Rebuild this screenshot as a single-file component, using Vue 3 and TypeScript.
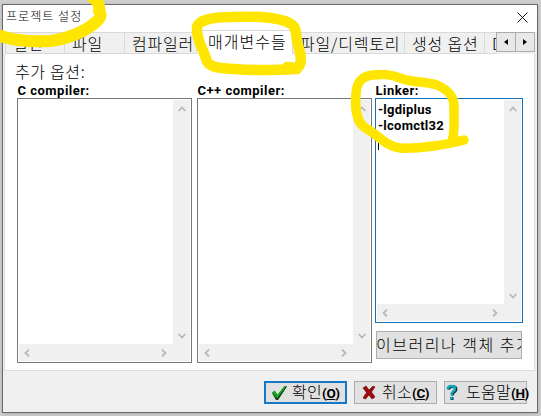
<script setup lang="ts">
interface Tab { label: string; width: number; active?: boolean }
interface Pane { label: string; text: string; focused?: boolean }

const tabs: Tab[] = [
  { label: '일반', width: 60 },
  { label: '파일', width: 60 },
  { label: '컴파일러', width: 72 },
  { label: '매개변수들', width: 96, active: true },
  { label: '파일/디렉토리', width: 112 },
  { label: '생성 옵션', width: 80 },
  { label: 'DLL', width: 52 },
]
const panes: Pane[] = [
  { label: 'C compiler:', text: '' },
  { label: 'C++ compiler:', text: '' },
  { label: 'Linker:', text: '-lgdiplus\n-lcomctl32\n', focused: true },
]
</script>

<template>
  <div class="desktop">
    <div class="window">
      <header class="title">
        <span>프로젝트 설정</span>
        <svg width="11" height="11" viewBox="0 0 11 11"><path d="M.5 .5l10 10M10.500 .5l-10 10" stroke="#111" fill="none" /></svg>
      </header>
      <nav class="tabs">
        <div class="strip">
          <div v-for="t in tabs" :key="t.label" class="tab" :class="{ active: t.active }" :style="{ width: t.width + 'px' }">{{ t.label }}</div>
        </div>
        <div class="spin">
          <button><svg width="4" height="6"><path d="M4 0v6L0 3z" /></svg></button>
          <button><svg width="4" height="6"><path d="M0 0v6L4 3z" /></svg></button>
        </div>
      </nav>
      <main class="page">
        <div class="heading">추가 옵션:</div>
        <div class="panes">
          <section v-for="p in panes" :key="p.label" class="pane" :class="{ focused: p.focused }">
            <label>{{ p.label }}</label>
            <div class="box">
              <div class="text">{{ p.text }}<i v-if="p.focused" class="caret"></i></div>
              <div class="vbar">
                <svg width="8" height="6"><path d="M.7 5L4 1.500L7.300 5" /></svg>
                <svg width="8" height="6"><path d="M.7 1L4 4.500L7.300 1" /></svg>
              </div>
              <div class="hbar">
                <svg width="6" height="8"><path d="M5 .7L1.500 4L5 7.300" /></svg>
                <svg width="6" height="8"><path d="M1 .7L4.500 4L1 7.300" /></svg>
              </div>
            </div>
            <button v-if="p.focused" class="add"><span>라이브러리나 객체 추가</span></button>
          </section>
        </div>
      </main>
      <footer class="actions">
        <button class="btn ok">
          <svg width="17" height="16" viewBox="0 0 17 16"><path d="M1 8l3-2 2.500 4L14 1l2 .5L7 15H5z" fill="#0b3a12" /><path d="M1 7.500l2.500-2L6 10 13.500 1l1.500.5L6 13.500z" fill="#18ab20" /></svg>
          <span>확인<b>(<u>O</u>)</b></span>
        </button>
        <button class="btn cancel">
          <svg width="14" height="15" viewBox="0 0 14 15"><path d="M1 3l3-2 3 4 4-4 2 1-3.500 5L13 12l-3 2-3-4-3.500 4L1 13l3.500-5.500z" fill="#9e0909" stroke="#650404" stroke-width=".6" /></svg>
          <span>취소<b>(<u>C</u>)</b></span>
        </button>
        <button class="btn help">
          <svg width="12" height="17" viewBox="0 0 12 17"><path d="M2.500 5.500Q3 2.500 6.500 2.500T10 5.500Q10 7 7.500 8.500Q6.500 9.500 6.500 11.500M4.500 14.500h3" fill="none" stroke="#063e4c" stroke-width="3" /><path d="M1.500 5Q2 2 5.500 2T9 4.500Q9 6 6.800 7.700Q5.500 9 5.500 11M4 14h2.500" fill="none" stroke="#13a8b8" stroke-width="2.400" /></svg>
          <span>도움말<b>(<u>H</u>)</b></span>
        </button>
      </footer>
    </div>
    <svg class="marker" width="541" height="416" viewBox="0 0 541 416">
      <path stroke-width="12" d="M-5 34C12 41 32 42 50 41C68 39 86 31 96 22C102 17 101 14 99 11C100 6 99 2 90-5" />
      <path stroke-width="10.500" d="M287 67L297 68C303 64 301 55 298 45C295 36 298 28 291 24C280 17 256 16 230 17C214 17 197 20 197 28C196 40 204 50 206 59C209 69 222 68 235 69C257 71 278 70 297 69" />
      <path stroke-width="9.500" d="M464 140C446 145 418 149 400 148C387 147 378 135 367 129C355 123 355 106 356 93C357 82 362 76 373 75C383 74 390 74 400 78C412 83 425 81 437 85C451 91 455 99 454 110C454 123 455 134 452 141" />
    </svg>
  </div>
</template>

<style>
body { overflow: hidden; }
</style>

<style scoped>
* { box-sizing: border-box; }
.desktop { position: relative; width: 541px; height: 416px; padding: 4px 3px 3px 2px; overflow: hidden; background: #d0d0d0; color: #000; font-family: "Noto Sans CJK KR", sans-serif; font-weight: 300; }
.window { display: flex; flex-direction: column; height: 409px; border: 1px solid #696969; background: #f0f0f0; box-shadow: 0 1px 4px #aaa; }
.title { display: flex; flex: none; justify-content: space-between; height: 27px; padding: 6px 9px 0 3px; background: #fff; font-size: 12px; line-height: 10px; letter-spacing: 1.05px; }
.title svg { margin-top: .5px; }
.tabs { display: flex; position: relative; height: 22px; padding-left: 2px; background: #f0f0f0; }
.strip { display: flex; width: 491px; }
.tab { flex: none; height: 22px; padding-left: 7px; border: 1px solid #d9d9d9; border-left: 0; white-space: nowrap; font-size: 16px; line-height: 21px; letter-spacing: .8px; }
.tab:first-child { border-left: 1px solid #d9d9d9; }
.tab.active { position: relative; margin-top: -2px; height: 24px; padding-left: 11px; background: #fff; border-bottom: 0; line-height: 21px; letter-spacing: 1px; }
.tab:last-child { width: 12px !important; overflow: hidden; border-right: 0; }
.spin { display: flex; }
.spin button { display: flex; align-items: center; justify-content: center; width: 20px; height: 20px; padding: 0; border: 1px solid #adadad; background: #e8e8e8; }
.spin button + button { margin-left: -1px; }
.page { flex: none; height: 317px; margin: 0 2px 0 1px; padding: 8px 0 0 13px; border: 1px solid #dcdcdc; border-top: 0; background: #fff; }
.heading { height: 20px; margin-left: -3px; font-size: 16px; line-height: 19px; letter-spacing: .65px; }
.panes { display: flex; gap: 5px; margin-left: -1px; }
.pane { width: 175px; }
.pane.focused { width: 148px; margin-left: -2px; }
label { display: block; height: 16px; padding-left: .5px; font: bold 13px/18px Roboto, sans-serif; letter-spacing: .5px; }
.box { display: grid; grid-template: 1fr 17px / 1fr 17px; height: 265px; padding: 1px; border: 1px solid #777; background: #fff; }
.focused .box { height: 225px; border-color: #1670b5; }
.text { padding: 2px 1px 0; white-space: pre; font: bold 13px/16px Roboto, sans-serif; letter-spacing: .25px; }
.caret { display: inline-block; width: 1px; height: 13px; margin-top: 3px; background: #000; vertical-align: top; }
.vbar { display: flex; flex-direction: column; align-items: center; justify-content: space-between; padding: 6px 0 5px; background: #f0f0f0; }
.hbar { grid-column: 1 / 3; display: flex; align-items: center; justify-content: space-between; padding: 0 23px 0 5px; background: #f0f0f0; }
.vbar path, .hbar path { fill: none; stroke: #b7b7b7; stroke-width: 1.8; }
button { color: #000; font: 300 16px "Noto Sans CJK KR", sans-serif; }
.add { display: flex; justify-content: center; width: 146px; height: 28px; margin: 8px 0 0 1px; padding: 0 6px 0 0; overflow: hidden; border: 1px solid #adadad; background: #e1e1e1; white-space: nowrap; line-height: 25px; letter-spacing: 1.5px; }
.actions { display: flex; gap: 7px; padding: 10px 0 0 261px; }
.btn { display: flex; align-items: center; width: 83px; height: 23px; padding: 0 0 0 7px; border: 1px solid #adadad; background: #e1e1e1; white-space: nowrap; line-height: 19px; letter-spacing: .3px; }
.btn svg { flex: none; }
.btn span { margin-top: -2px; }
.btn b { font: bold 13.5px Roboto, sans-serif; letter-spacing: -.4px; }
.ok { border: 2px solid #1379c8; padding-left: 5px; gap: 4px; }
.cancel { gap: 6px; }
.help { padding-left: 1px; gap: 8px; }
.marker { position: absolute; inset: 0; pointer-events: none; }
.marker path { fill: none; stroke: #ffe600; stroke-linecap: round; stroke-linejoin: round; }
</style>
